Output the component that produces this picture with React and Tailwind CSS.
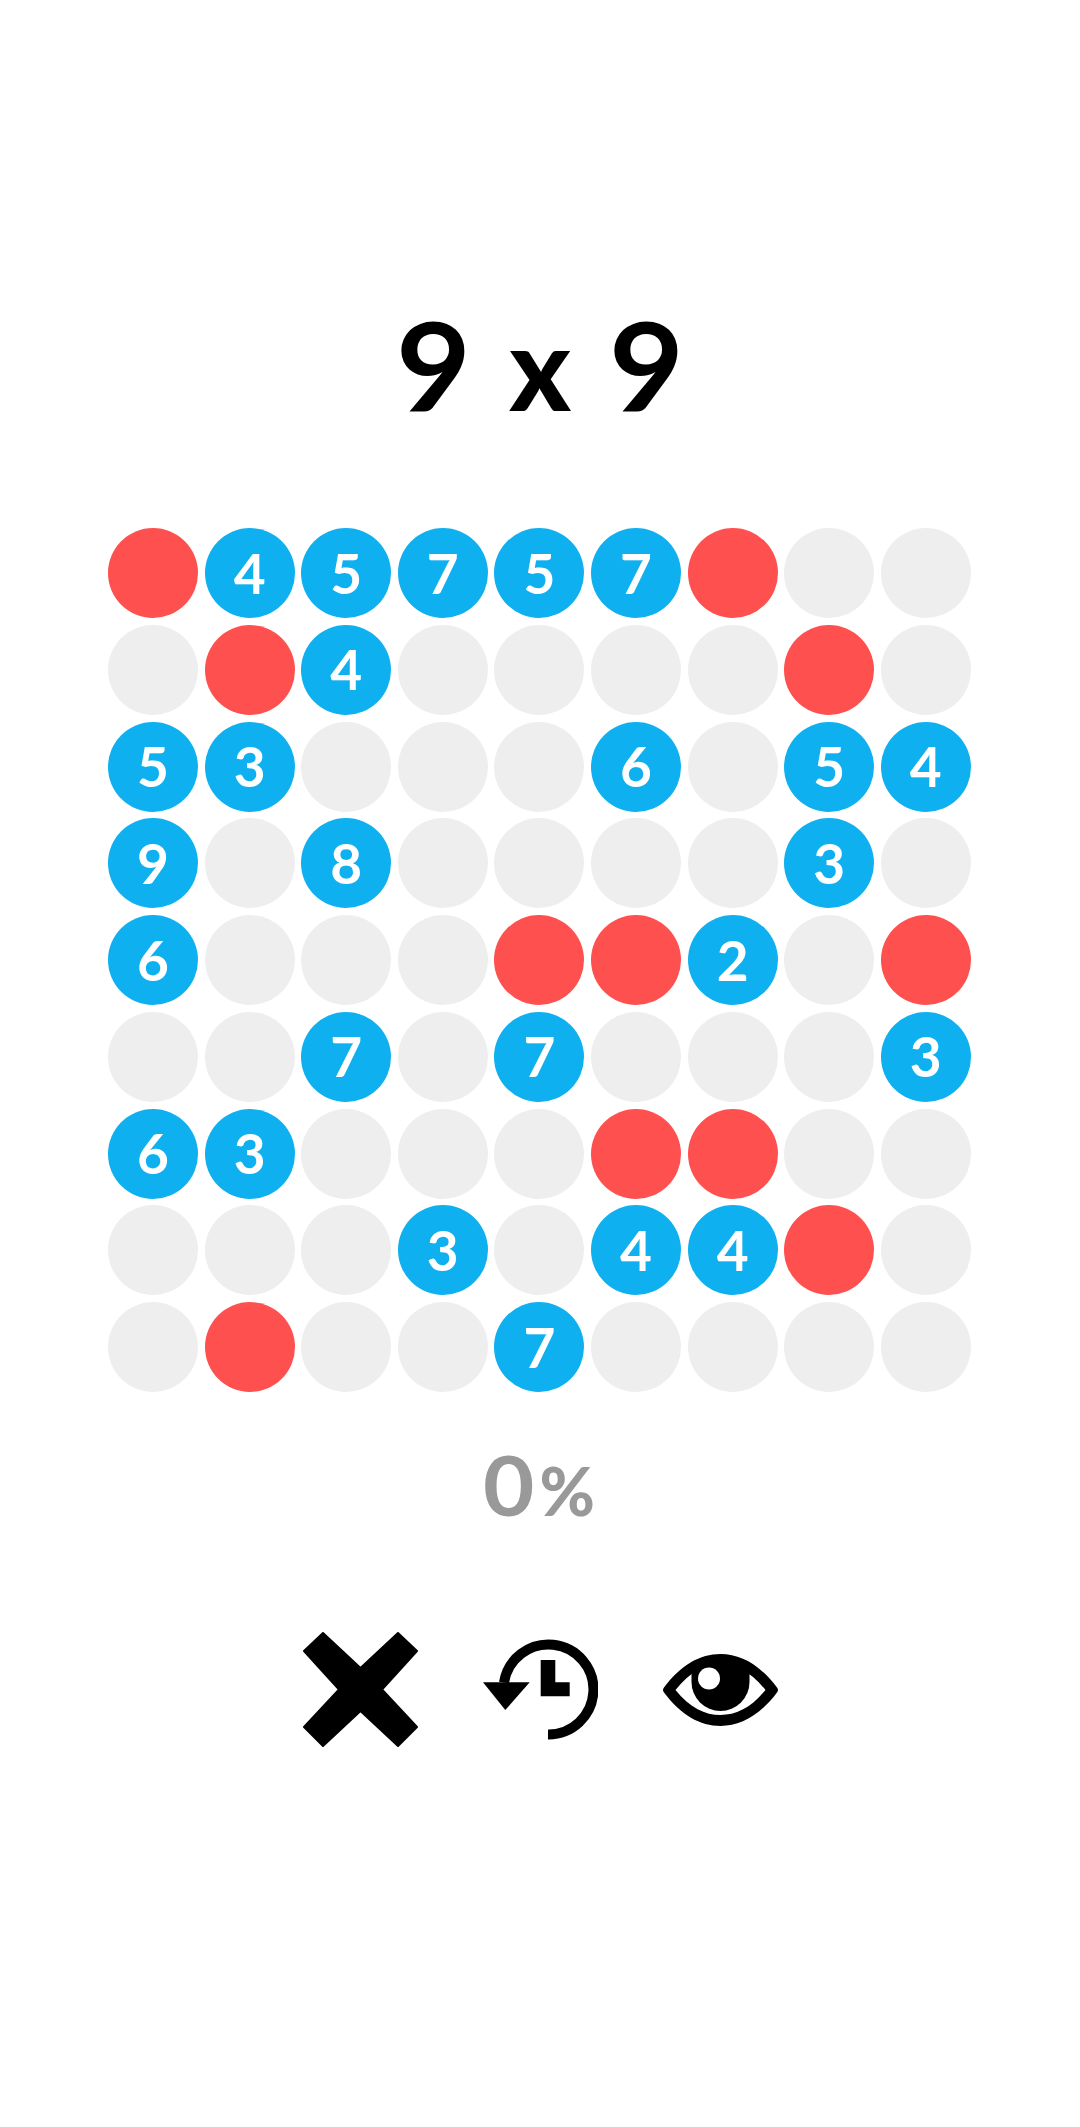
import React from 'react';

const BOARD = [
  ['r', 4, 5, 7, 5, 7, 'r', 0, 0],
  [0, 'r', 4, 0, 0, 0, 0, 'r', 0],
  [5, 3, 0, 0, 0, 6, 0, 5, 4],
  [9, 0, 8, 0, 0, 0, 0, 3, 0],
  [6, 0, 0, 0, 'r', 'r', 2, 0, 'r'],
  [0, 0, 7, 0, 7, 0, 0, 0, 3],
  [6, 3, 0, 0, 0, 'r', 'r', 0, 0],
  [0, 0, 0, 3, 0, 4, 4, 'r', 0],
  [0, 'r', 0, 0, 7, 0, 0, 0, 0],
];

const Cell = ({ value }) => {
  if (value === 'r') return <div className="w-[90px] h-[90px] rounded-full bg-[#ff5050]" />;
  if (value === 0) return <div className="w-[90px] h-[90px] rounded-full bg-[#eeeeee]" />;
  return (
    <div className="w-[90px] h-[90px] rounded-full bg-[#0fb0f0] flex items-center justify-center text-white text-[55px] leading-none font-bold">
      {value}
    </div>
  );
};

const CloseIcon = () => (
  <svg width="115" height="115" viewBox="0 0 115 115">
    <path
      d="M1 19 L20 1 L57.5 36 L95 1 L114 19 L79 57.5 L114 95 L95 114 L57.5 79 L20 114 L1 95 L36 57.5 Z"
      fill="#000"
      stroke="#000"
      strokeWidth="2"
      strokeLinejoin="round"
    />
  </svg>
);

const HistoryIcon = () => (
  <svg width="115" height="101" viewBox="0 0 115 101">
    <path d="M21 43.5 A45 45 0 1 1 65 95.5" fill="none" stroke="#000" strokeWidth="10" />
    <path d="M0 43.3 H46.7 L22.3 71 Z" fill="#000" />
    <path d="M57.7 21 H72.3 V43.3 H86.7 V57.3 H57.7 Z" fill="#000" />
  </svg>
);

const EyeIcon = () => (
  <svg width="115" height="72" viewBox="0 0 115 72">
    <path
      fillRule="evenodd"
      fill="#000"
      d="M1 33.5 C18 11 37 0 57.5 0 C78 0 97 11 114 33.5 Q116 36 114 38.5 C97 61 78 72 57.5 72 C37 72 18 61 1 38.5 Q-1 36 1 33.5 Z M12.5 36 C27 54 42 61 57.5 61 C73 61 88 54 102.5 36 C88 18 73 10 57.5 10 C42 10 27 18 12.5 36 Z"
    />
    <path
      fill="#000"
      d="M28.5 28 A29 29 0 0 0 86.5 28 L86.5 17 C78 12 68 9 57.5 9 C47 9 37 12 28.5 17 Z"
    />
    <circle cx="46" cy="24.5" r="11" fill="#fff" />
  </svg>
);

export default function App() {
  return (
    <div
      className="w-[1080px] h-[2127px] bg-white flex flex-col items-center overflow-hidden text-black"
      style={{ fontFamily: 'Lato, sans-serif' }}
    >
      <div className="mt-[303px] h-[146px] flex items-baseline justify-center font-bold leading-none">
        <span className="inline-block text-[122px] scale-x-[1.06]">9</span>
        <span className="text-[116px] font-black mx-[40px]">x</span>
        <span className="inline-block text-[122px] scale-x-[1.06]">9</span>
      </div>

      <div className="mt-[79px] pr-[1.2px] grid grid-cols-9 gap-x-[6.6px] gap-y-[6.75px]">
        {BOARD.map((row, i) => row.map((value, j) => <Cell key={`${i}-${j}`} value={value} />))}
      </div>

      <div className="mt-[51px] h-[100px] flex items-baseline justify-center text-[#999999] font-bold leading-none">
        <span className="inline-block text-[82px] scale-x-[1.08]">0</span>
        <span className="text-[67px] font-black ml-[7px]">%</span>
      </div>

      <div className="mt-[89px] flex items-center gap-[65px]">
        <CloseIcon />
        <HistoryIcon />
        <EyeIcon />
      </div>
    </div>
  );
}
